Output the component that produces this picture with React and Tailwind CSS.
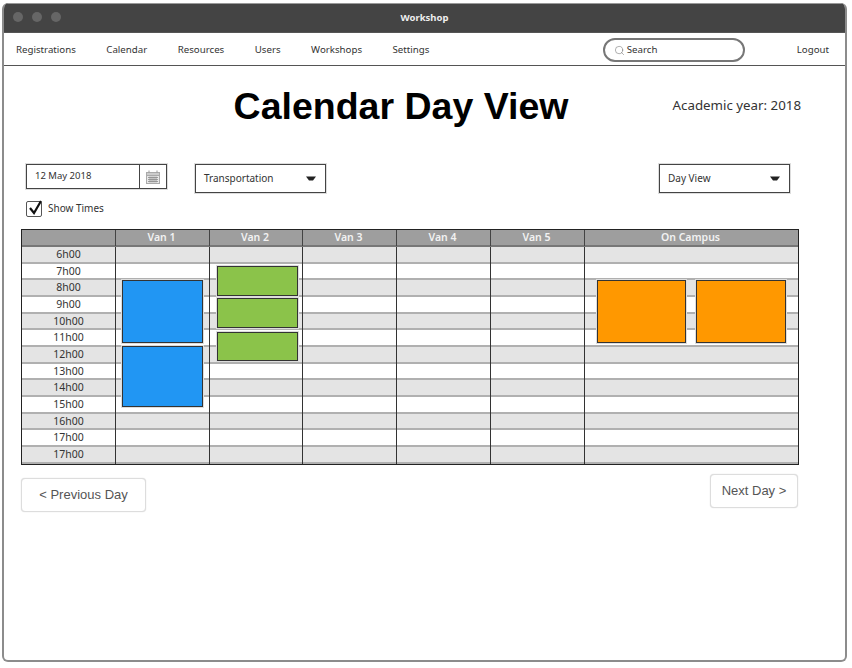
import { Search } from 'lucide-react'

const navItems = ['Registrations', 'Calendar', 'Resources', 'Users', 'Workshops', 'Settings']
const vans = ['Van 1', 'Van 2', 'Van 3', 'Van 4', 'Van 5']
const hours = ['6h00', '7h00', '8h00', '9h00', '10h00', '11h00', '12h00', '13h00', '14h00', '15h00', '16h00', '17h00', '17h00']

const plex = "font-['Noto_Sans',sans-serif]"

// Blocks lying over the table rows
const events = [
  { id: 'b1', className: 'left-[100px] top-[50px] w-[81px] h-[63px] bg-[#2196f3]' },
  { id: 'b2', className: 'left-[100px] top-[116px] w-[81px] h-[61px] bg-[#2196f3]' },
  { id: 'g1', className: 'left-[195px] top-[36px] w-[81px] h-[30px] bg-[#8bc34a]' },
  { id: 'g2', className: 'left-[195px] top-[68px] w-[81px] h-[30px] bg-[#8bc34a]' },
  { id: 'g3', className: 'left-[195px] top-[102px] w-[81px] h-[29px] bg-[#8bc34a]' },
  { id: 'o1', className: 'left-[575px] top-[50px] w-[89px] h-[63px] bg-[#ff9800]' },
  { id: 'o2', className: 'left-[674px] top-[50px] w-[90px] h-[63px] bg-[#ff9800]' },
]

function Caret() {
  return (
    <svg width="10" height="5" viewBox="0 0 10 5" className="shrink-0">
      <path d="M0 0.5 H10 L7 4.5 H3 Z" fill="#222" />
    </svg>
  )
}

function CalendarIcon() {
  return (
    <svg width="14" height="14" viewBox="0 0 14 14" fill="none">
      <rect x="0.5" y="2.5" width="13" height="11" fill="#e8e8e8" stroke="#aaa" />
      <rect x="0.5" y="2.5" width="13" height="3" fill="#ccc" stroke="#aaa" />
      <path d="M3 0.5v2M11 0.5v2" stroke="#999" />
      <path d="M2 7.5h10M2 9.5h10M2 11.5h10M4 6.5v6M6 6.5v6M8 6.5v6M10 6.5v6" stroke="#8a8a8a" strokeWidth="0.8" />
    </svg>
  )
}

function Select({ label, className }) {
  return (
    <div className={`flex items-center justify-between w-[131px] h-[29px] pl-[8px] pr-[9px] bg-white border border-[#444] shadow-[0_0_0_1px_#ddd] text-[10px] text-[#333] ${className}`}>
      <span>{label}</span>
      <Caret />
    </div>
  )
}

function TimeRow({ hour, index }) {
  const striped = index % 2 === 0
  return (
    <div className={`grid grid-cols-[93px_94px_93px_94px_94px_94px_1fr] h-[16.66px] border-b-2 border-[#b0b0b0] last:border-b-0 ${striped ? 'bg-[#e4e4e4]' : 'bg-white'}`}>
      <div className="flex items-center justify-center text-[10.5px] leading-none text-[#333]">{hour}</div>
      {[0, 1, 2, 3, 4, 5].map((c) => (
        <div key={c} className="border-l border-[#333] -mb-[2px]" />
      ))}
    </div>
  )
}

export default function App() {
  return (
    <div className={`w-[852px] h-[668px] bg-white pt-[3px] pl-[2px] ${plex}`}>
      <div className="flex flex-col w-[845px] h-[659px] border-2 border-t-0 border-[#8c8c8c] rounded-[6px] overflow-hidden bg-white">
        {/* Title bar */}
        <header className="relative flex items-center justify-center h-[29px] -mx-[2px] bg-[#444444] border-t border-[#999] shrink-0">
          <div className="absolute left-[11px] top-[8px] flex gap-[9px]">
            <span className="w-[10px] h-[10px] rounded-full bg-[#666]" />
            <span className="w-[10px] h-[10px] rounded-full bg-[#666]" />
            <span className="w-[10px] h-[10px] rounded-full bg-[#666]" />
          </div>
          <span className="text-[9.5px] font-bold text-[#eeeeee]">Workshop</span>
        </header>

        {/* Navigation */}
        <nav className="flex items-center h-[34px] -mx-[2px] pl-[13px] pr-[17px] bg-white border border-[#555] text-[9.7px] text-[#333] shrink-0">
          <ul className="flex gap-[30.5px] mt-[2px]">
            {navItems.map((item) => (
              <li key={item}>{item}</li>
            ))}
          </ul>
          <div className="ml-auto mr-[52px] mt-[2px] flex items-center gap-[2px] w-[142px] h-[24px] pl-[9px] border-2 border-[#777] rounded-full text-[#333]">
            <Search size={11} strokeWidth={1} className="text-[#555]" />
            <span>Search</span>
          </div>
          <span className="mt-[2px]">Logout</span>
        </nav>

        {/* Page */}
        <main className="flex-1 pl-[17px] pr-[46px]">
          <div className="relative flex justify-center pt-[17px] h-[98px]">
            <h1 className="font-['Liberation_Sans',sans-serif] font-bold text-[37.5px] leading-[46px] text-black ml-[-18px]">Calendar Day View</h1>
            <span className="absolute right-[-2px] top-[29px] text-[13.3px] leading-[20px] text-[#333]">Academic year: 2018</span>
          </div>

          <div className="flex items-start pl-[5px] pr-[9px]">
            <div className="flex w-[141px] h-[25px] bg-white border border-[#444] shadow-[0_0_0_1px_#ddd] text-[9.5px] text-[#333]">
              <span className="flex-1 flex items-center pl-[8px] -mt-[1px]">12 May 2018</span>
              <span className="flex items-center justify-center w-[27px] border-l border-[#444]">
                <CalendarIcon />
              </span>
            </div>
            <Select label="Transportation" className="ml-[28px]" />
            <Select label="Day View" className="ml-auto" />
          </div>

          <div className="flex items-center gap-[6px] mt-[7px] pl-[5px] h-[17px] text-[10px] text-[#333]">
            <span className="relative w-[16px] h-[16px] bg-white border border-[#555] rounded-[2px]">
              <svg width="18" height="18" viewBox="0 0 18 18" fill="none" className="absolute left-[0px] -top-[3px]">
                <path d="M3 9 L7 14 L14 2" stroke="#111" strokeWidth="2.2" />
              </svg>
            </span>
            <span>Show Times</span>
          </div>

          {/* Table */}
          <div className="relative mt-[12px] w-[778px] border border-[#222]">
            <div className="grid grid-cols-[93px_94px_93px_94px_94px_94px_1fr] h-[17px] bg-[#9e9e9e] border-b-2 border-[#777] text-[10.5px] font-semibold text-[#f2f2f2]">
              <div />
              {[...vans, 'On Campus'].map((name) => (
                <div key={name} className="flex items-center justify-center border-l border-[#444] pr-[2px]">{name}</div>
              ))}
            </div>
            {hours.map((hour, i) => (
              <TimeRow key={i} hour={hour} index={i} />
            ))}
            {events.map((e) => (
              <div key={e.id} className={`absolute border border-[#333] shadow-[0_0_0_1px_#ddd] ${e.className}`} />
            ))}
          </div>

          <div className="flex items-start justify-between w-[778px] pt-[9px] font-['Liberation_Sans',sans-serif] text-[13px] text-[#555]">
            <button className="mt-[4px] w-[125px] h-[34px] bg-white border border-[#ddd] rounded-[4px] shadow-[0_0_1px_#ccc]">&lt; Previous Day</button>
            <button className="w-[88px] h-[34px] mr-[1px] bg-white border border-[#ddd] rounded-[4px] shadow-[0_0_1px_#ccc]">Next Day &gt;</button>
          </div>
        </main>
      </div>
    </div>
  )
}
